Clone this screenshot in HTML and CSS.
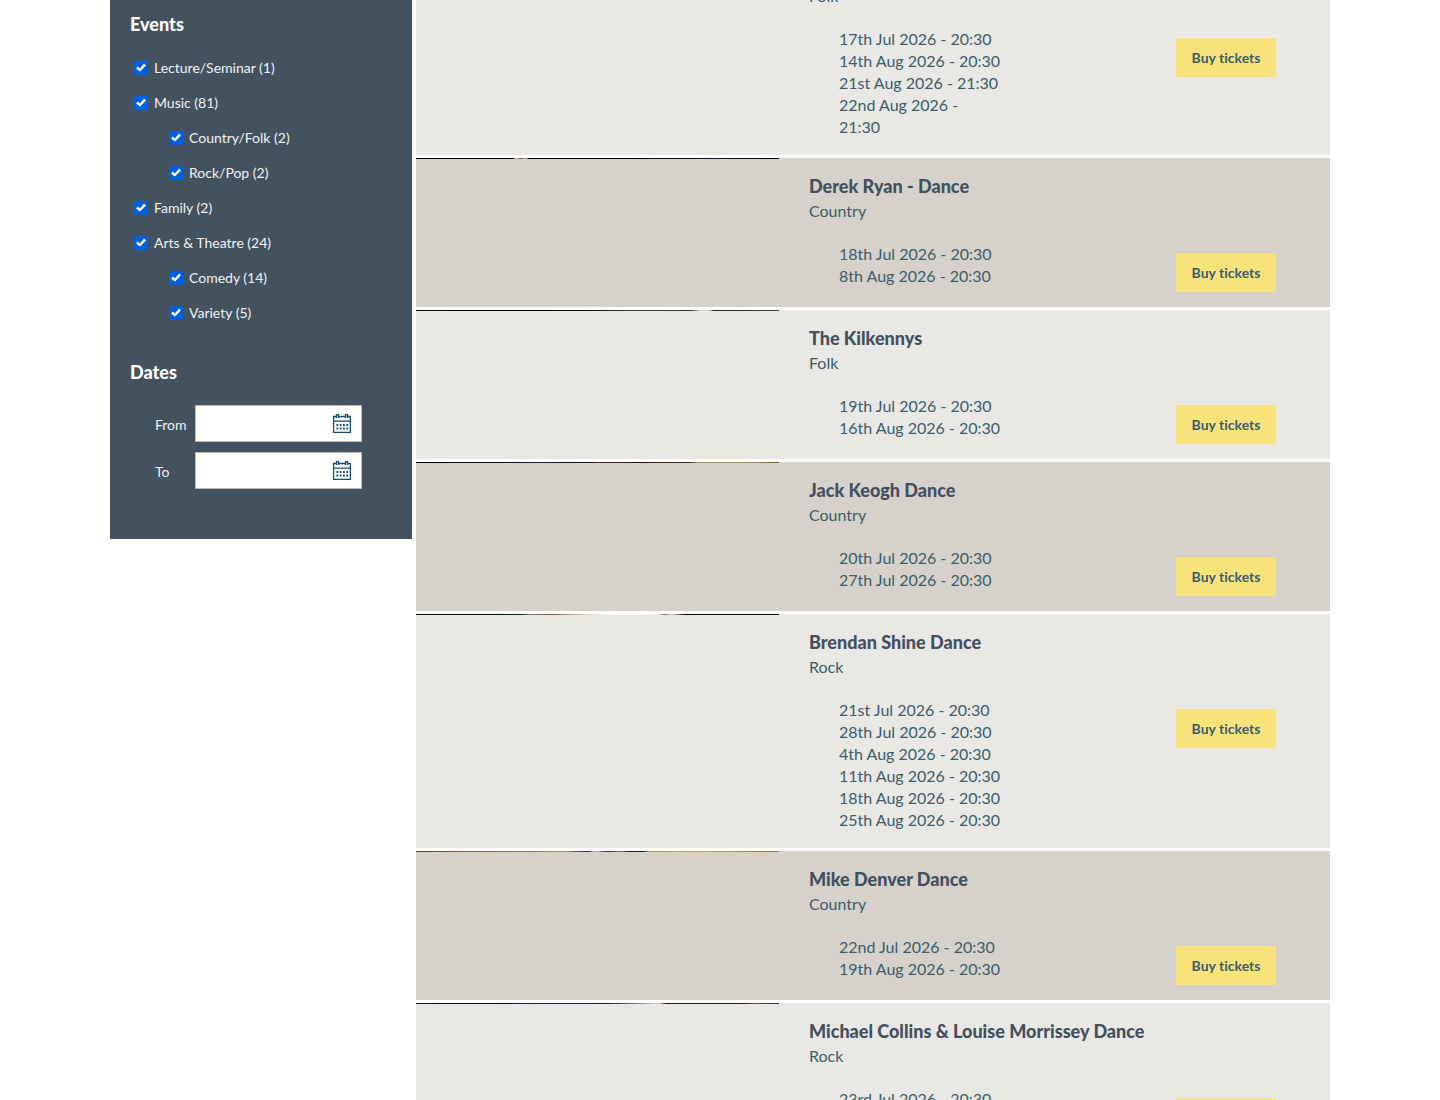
FILE: index.html
```html
<!DOCTYPE html>
<html lang="en">
<head>
<meta charset="utf-8">
<meta name="viewport" content="width=device-width, initial-scale=1">
<title>Events</title>
<link rel="stylesheet" href="styles.css">
</head>
<body>
<svg width="0" height="0" class="sprite" aria-hidden="true">
  <symbol id="calendar" viewBox="0 0 18 19">
    <path fill="none" stroke="currentColor" stroke-width="1.300" d="M.6 2v16.400h16.800V2M0 7.200h18"/>
    <path fill="none" stroke="currentColor" stroke-width="1.300" d="M0 2.500h3M6 2.500h6M15 2.500h3"/>
    <path fill="none" stroke="currentColor" stroke-width="1.300" d="M3.500 4V.6h2V4M12.500 4V.6h2V4"/>
    <path stroke="currentColor" stroke-width="1.800" stroke-dasharray="1.800 1.500" d="M3.400 11h12M3.400 14.500h12"/>
  </symbol>
</svg>
<div class="page">
  <aside class="filters">
    <h2>Events</h2>
    <ul class="options">
      <li><label><input type="checkbox" checked>Lecture/Seminar (1)</label></li>
      <li><label><input type="checkbox" checked>Music (81)</label>
        <ul>
          <li><label><input type="checkbox" checked>Country/Folk (2)</label></li>
          <li><label><input type="checkbox" checked>Rock/Pop (2)</label></li>
        </ul>
      </li>
      <li><label><input type="checkbox" checked>Family (2)</label></li>
      <li><label><input type="checkbox" checked>Arts &amp; Theatre (24)</label>
        <ul>
          <li><label><input type="checkbox" checked>Comedy (14)</label></li>
          <li><label><input type="checkbox" checked>Variety (5)</label></li>
        </ul>
      </li>
    </ul>
    <h2>Dates</h2>
    <div class="dates-form">
      <div class="field">
        <label for="from">From</label>
        <div class="picker"><input type="text" id="from"><button type="button" aria-label="Pick from date"><svg><use href="#calendar"/></svg></button></div>
      </div>
      <div class="field">
        <label for="to">To</label>
        <div class="picker"><input type="text" id="to"><button type="button" aria-label="Pick to date"><svg><use href="#calendar"/></svg></button></div>
      </div>
    </div>
  </aside>
  <main class="events">
    <article class="event">
      <div class="photo"></div>
      <div class="info">
        <p>Folk</p>
        <div class="booking">
          <ul><li>17th Jul 2026 - 20:30</li><li>14th Aug 2026 - 20:30</li><li>21st Aug 2026 - 21:30</li><li>22nd Aug 2026 -<br>21:30</li></ul>
          <button type="button">Buy tickets</button>
        </div>
      </div>
    </article>
    <article class="event">
      <div class="photo photo-ryan"></div>
      <div class="info">
        <h3>Derek Ryan - Dance</h3>
        <p>Country</p>
        <div class="booking">
          <ul><li>18th Jul 2026 - 20:30</li><li>8th Aug 2026 - 20:30</li></ul>
          <button type="button">Buy tickets</button>
        </div>
      </div>
    </article>
    <article class="event">
      <div class="photo photo-kilkennys"></div>
      <div class="info">
        <h3>The Kilkennys</h3>
        <p>Folk</p>
        <div class="booking">
          <ul><li>19th Jul 2026 - 20:30</li><li>16th Aug 2026 - 20:30</li></ul>
          <button type="button">Buy tickets</button>
        </div>
      </div>
    </article>
    <article class="event">
      <div class="photo photo-keogh"></div>
      <div class="info">
        <h3>Jack Keogh Dance</h3>
        <p>Country</p>
        <div class="booking">
          <ul><li>20th Jul 2026 - 20:30</li><li>27th Jul 2026 - 20:30</li></ul>
          <button type="button">Buy tickets</button>
        </div>
      </div>
    </article>
    <article class="event">
      <div class="photo photo-shine"></div>
      <div class="info">
        <h3>Brendan Shine Dance</h3>
        <p>Rock</p>
        <div class="booking">
          <ul><li>21st Jul 2026 - 20:30</li><li>28th Jul 2026 - 20:30</li><li>4th Aug 2026 - 20:30</li><li>11th Aug 2026 - 20:30</li><li>18th Aug 2026 - 20:30</li><li>25th Aug 2026 - 20:30</li></ul>
          <button type="button">Buy tickets</button>
        </div>
      </div>
    </article>
    <article class="event">
      <div class="photo photo-denver"></div>
      <div class="info">
        <h3>Mike Denver Dance</h3>
        <p>Country</p>
        <div class="booking">
          <ul><li>22nd Jul 2026 - 20:30</li><li>19th Aug 2026 - 20:30</li></ul>
          <button type="button">Buy tickets</button>
        </div>
      </div>
    </article>
    <article class="event">
      <div class="photo photo-collins"></div>
      <div class="info">
        <h3>Michael Collins &amp; Louise Morrissey Dance</h3>
        <p>Rock</p>
        <div class="booking">
          <ul><li>23rd Jul 2026 - 20:30</li></ul>
          <button type="button">Buy tickets</button>
        </div>
      </div>
    </article>
  </main>
</div>
</body>
</html>
```
FILE: styles.css
```css
* { box-sizing: border-box; }

body {
  margin: 0;
  height: 100vh;
  overflow: hidden;
  background: #fff;
  color: #3b5d6b;
  font-family: Lato, "Liberation Sans", sans-serif;
  font-size: 16px;
  line-height: 22px;
  font-variant-ligatures: none;
}

h2, h3, p, ul { margin: 0; padding: 0; }
ul { list-style: none; }
button, input {
  font-family: inherit;
  font-variant-ligatures: none;
}
h2, h3 {
  font-family: "Lato Black", Lato, "Liberation Sans", sans-serif;
  font-size: 18px;
  font-weight: 900;
}
.sprite { display: block; }

.page {
  display: flex;
  align-items: flex-start;
  gap: 4px;
  max-width: 1220px;
  margin: 0 auto;
}

/* Filters */
.filters {
  flex: 0 0 302px;
  padding: 10px 20px 50px;
  background: #44515f;
  color: #fff;
  font-size: 14px;
}
.filters h2 { line-height: 28px; }
.options {
  padding: 12px 0 28px 24px;
}
.options ul { padding-left: 35px; }
.options label {
  display: flex;
  align-items: center;
  height: 35px;
  color: #f2f3f4;
}
.options input {
  appearance: none;
  flex: none;
  width: 14px;
  height: 14px;
  margin: 0 6px 0 -20px;
  background: #0060df;
  border-radius: 1px;
}
.options input:checked::before {
  content: "";
  display: block;
  width: 14px;
  height: 14px;
  background: #fff;
  clip-path: polygon(2px 8px, 4px 6px, 6px 8px, 10px 3px, 12px 5px, 6px 11px);
}

.dates-form {
  display: flex;
  flex-direction: column;
  gap: 10px;
  padding: 19px 30px 0 25px;
}
.field {
  display: flex;
  align-items: center;
}
.field label {
  flex: 0 0 40px;
  padding-top: 2px;
  color: #f2f3f4;
}
.picker {
  position: relative;
  flex: 1;
}
.picker input {
  display: block;
  width: 100%;
  height: 37px;
  padding: 0 34px 0 10px;
  border: 1px solid #bbb;
  background: #fff;
  font-size: 14px;
}
.picker button {
  position: absolute;
  top: 9px;
  right: 11px;
  width: 18px;
  height: 19px;
  padding: 0;
  border: 0;
  background: none;
  color: #184c6e;
}
.picker svg {
  display: block;
  width: 18px;
  height: 19px;
}

/* Event list, scrolled part-way into its first row */
.events {
  flex: 1;
  display: flex;
  flex-direction: column;
  gap: 3px;
  margin-top: -15px;
}
.event {
  display: flex;
  align-items: flex-start;
  background: #e9e8e4;
}
.event:nth-child(even) { background: #d6d1ca; }

.photo {
  flex: 0 0 363px;
  height: 1px;
  background: #000;
}
.photo-ryan { background: linear-gradient(90deg, #000 0 97px, #e8c4bc 100px, #8a3038 105px, #d9b0a8 110px, #000 113px 210px, #0c1c2c 300px, #000); }
.photo-kilkennys { background: linear-gradient(90deg, #000, #0a0a0a 170px, #444 220px, #333 275px, #ddd 285px, #ccc 293px, #222 298px, #444); }
.photo-keogh { background: linear-gradient(90deg, #000, #121c2c 120px, #10151f 175px, #4a2f1c 182px, #1c100c 220px, #5a351c 275px, #b8964a 282px 325px, #6d6a1c); }
.photo-shine { background: linear-gradient(90deg, #000 0 80px, #0a3024 105px, #8a7a70 115px, #a04a30 135px, #f0b090 165px, #fff4e4 190px, #fff 220px, #fadfc4 243px, #8a6a50 247px, #cfc4b4 256px, #000 270px); }
.photo-denver { background: linear-gradient(90deg, #704010, #c08850 150px, #555 160px, #333 172px, #ccc 180px, #333 190px, #666 205px, #1c1c1c 215px 228px, #c08850 232px, #d0a060 280px, #a07030); }
.photo-collins { background: linear-gradient(90deg, #14143c, #0a0f0f 25px 80px, #1a1f50 110px, #141838 190px, #8c8c90 225px, #ddd0c8 243px, #241812 250px 325px, #6a5048 338px, #2c3c4c); }

.info {
  flex: 1;
  padding: 15px 54px 15px 30px;
}
.event:first-child .info { padding-top: 0; }
.info h3 {
  margin-bottom: 1px;
  color: #414f5f;
  line-height: 26px;
}
.info p { margin-bottom: 21px; }

.booking {
  display: flex;
  align-items: flex-start;
  justify-content: space-between;
}
.booking ul {
  flex: 0 0 191px;
  padding: 0 0 2px 30px;
  white-space: nowrap;
}
.booking button {
  width: 100px;
  height: 39px;
  margin-top: 10px;
  padding: 0;
  border: 0;
  background: #f8e37a;
  color: #3b5d6b;
  font-size: 14px;
  font-weight: 700;
}
```
